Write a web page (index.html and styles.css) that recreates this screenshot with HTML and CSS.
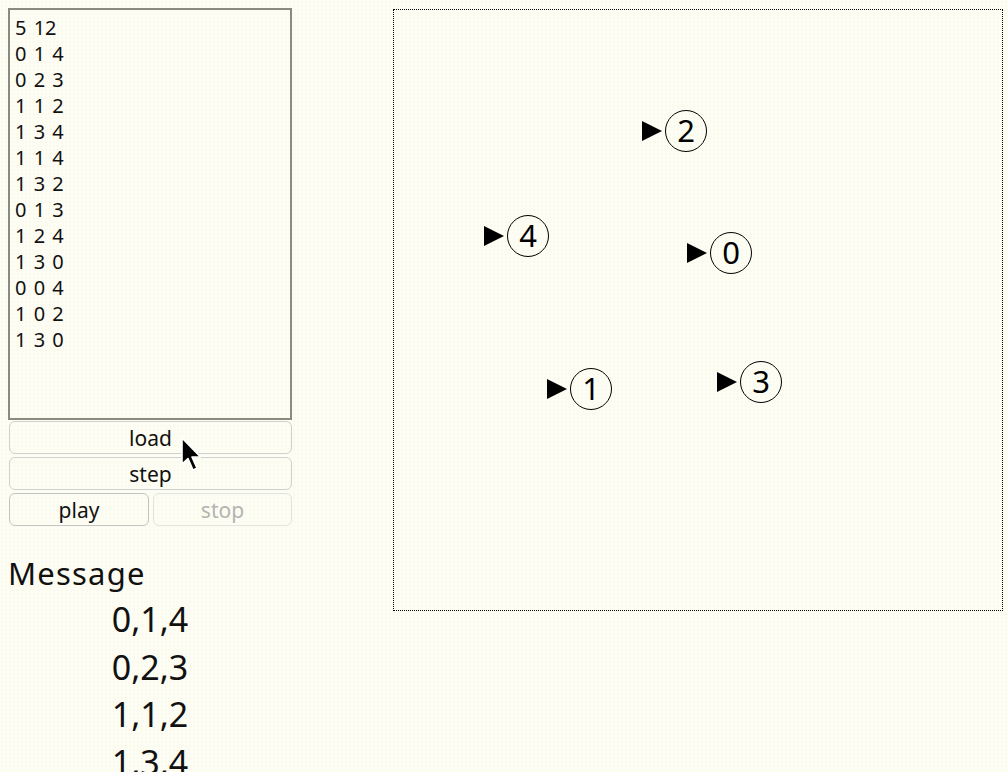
FILE: index.html
```html
<!DOCTYPE html>
<html>
<head>
<meta charset="utf-8">
<link rel="stylesheet" href="styles.css">
</head>
<body>
<div class="page">
  <div class="left">
    <textarea class="input" spellcheck="false">5 12
0 1 4
0 2 3
1 1 2
1 3 4
1 1 4
1 3 2
0 1 3
1 2 4
1 3 0
0 0 4
1 0 2
1 3 0</textarea>
    <div class="controls">
      <button class="btn">load</button>
      <button class="btn">step</button>
      <div class="row">
        <button class="btn">play</button>
        <button class="btn" disabled>stop</button>
      </div>
    </div>
    <div class="message-title">Message</div>
    <div class="messages">
      <div class="msg">0,1,4</div>
      <div class="msg">0,2,3</div>
      <div class="msg">1,1,2</div>
      <div class="msg">1,3,4</div>
    </div>
  </div>
  <div class="canvas">
    <div class="node n2"><svg class="tri" viewBox="0 0 20 20"><path d="M0 0 L20 10 L0 20 Z"/></svg><span class="circ">2</span></div>
    <div class="node n4"><svg class="tri" viewBox="0 0 20 20"><path d="M0 0 L20 10 L0 20 Z"/></svg><span class="circ">4</span></div>
    <div class="node n0"><svg class="tri" viewBox="0 0 20 20"><path d="M0 0 L20 10 L0 20 Z"/></svg><span class="circ">0</span></div>
    <div class="node n1"><svg class="tri" viewBox="0 0 20 20"><path d="M0 0 L20 10 L0 20 Z"/></svg><span class="circ">1</span></div>
    <div class="node n3"><svg class="tri" viewBox="0 0 20 20"><path d="M0 0 L20 10 L0 20 Z"/></svg><span class="circ">3</span></div>
  </div>
</div>
<svg class="cursor" width="24" height="40" viewBox="0 0 24 40">
  <path d="M2 2 L2 28 L8 22.5 L13 34 L17 32.3 L12 21 L20.5 21 Z" fill="#000" stroke="#fff" stroke-width="1.6" stroke-linejoin="round"/>
</svg>
</body>
</html>
```

FILE: styles.css
```css
html, body {
  margin: 0;
  padding: 0;
}
body {
  background-color: #fdfdf8;
  background-image: radial-gradient(circle, rgba(250, 240, 120, 0.35) 0.6px, transparent 0.8px);
  background-size: 4px 4px;
  font-family: "Noto Sans", sans-serif;
  color: #111;
  width: 1008px;
  height: 772px;
  overflow: hidden;
  position: relative;
}
.page {
  display: flex;
  align-items: flex-start;
  padding: 8px 0 0 8px;
}
.left {
  width: 284px;
  display: flex;
  flex-direction: column;
}
.input {
  box-sizing: border-box;
  width: 284px;
  height: 412px;
  border: 2px solid #8a8a7e;
  background: transparent;
  margin: 0;
  padding: 5px 5px 2px;
  resize: none;
  font-family: "Noto Sans", sans-serif;
  font-size: 20px;
  word-spacing: 2px;
  line-height: 26px;
  color: #111;
  outline: none;
  overflow: hidden;
}
.controls {
  display: flex;
  flex-direction: column;
  gap: 3px;
  margin-top: 1px;
  padding-left: 1px;
}
.row {
  display: flex;
  gap: 4px;
}
.btn {
  box-sizing: border-box;
  height: 33px;
  width: 283px;
  border: 1px solid #d0d0cc;
  border-radius: 6px;
  background: transparent;
  font-family: "Noto Sans", sans-serif;
  font-size: 21px;
  color: #111;
  padding: 2px 0 0 0;
  line-height: 1;
}
.row .btn {
  width: 139px;
}
.row .btn:first-child {
  width: 140px;
  border-color: #c4c4c0;
}
.btn:disabled {
  color: #b4b4b0;
  border-color: #e4e4de;
}
.message-title {
  margin-top: 27px;
  font-size: 31px;
  letter-spacing: 1.2px;
  line-height: 40px;
}
.messages {
  display: flex;
  flex-direction: column;
  align-items: center;
  margin-top: 3px;
}
.msg {
  font-size: 34px;
  line-height: 47.5px;
}
.canvas {
  position: relative;
  box-sizing: border-box;
  margin-left: 101px;
  margin-top: 1px;
  width: 610px;
  height: 602px;
  border: 1px dotted #000;
  flex-shrink: 0;
}
.node {
  position: absolute;
  display: flex;
  align-items: center;
  gap: 3px;
}
.tri {
  width: 20px;
  height: 20px;
  fill: #000;
}
.circ {
  box-sizing: border-box;
  width: 42px;
  height: 42px;
  border: 1.5px solid #000;
  border-radius: 50%;
  display: flex;
  align-items: center;
  justify-content: center;
  font-family: "Noto Sans", sans-serif;
  font-size: 31px;
  line-height: 1;
  color: #000;
  padding-bottom: 1px;
}
.n2 { left: 248px; top: 100px; }
.n4 { left: 90px; top: 205px; }
.n0 { left: 293px; top: 222px; }
.n1 { left: 153px; top: 358px; }
.n3 { left: 323px; top: 351px; }
.cursor {
  position: absolute;
  left: 180px;
  top: 436px;
}
```
